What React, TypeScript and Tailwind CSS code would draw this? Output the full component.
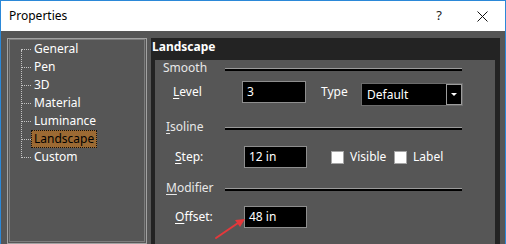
import React from 'react'

const font = { fontFamily: '"Noto Sans", "Open Sans", sans-serif' }

const treeItems = ['General', 'Pen', '3D', 'Material', 'Luminance', 'Landscape', 'Custom']

function Ul({ first, rest }: { first: string; rest: string }) {
  return (
    <span>
      <span className="underline underline-offset-2">{first}</span>
      {rest}
    </span>
  )
}

function GroupHeader({ label, pl, w }: { label: React.ReactNode; pl: string; w: string }) {
  return (
    <div className={`flex items-center h-[16px] ${pl}`}>
      <div className={`${w} leading-[16px] text-[#e8e8e8]`}>{label}</div>
      <div className="w-[237px] h-[3px] border-t border-[#9a9a9a] bg-black mt-[3px]" />
    </div>
  )
}

function TextBox({ value, w }: { value: string; w: string }) {
  return (
    <div className={`${w} h-[22px] bg-black border border-[#8e8e8e] pl-[4px] leading-[20px] text-white`}>
      {value}
    </div>
  )
}

function CheckBox({ label, w }: { label: string; w: string }) {
  return (
    <div className="flex items-center">
      <div className="w-[13px] h-[13px] bg-white border border-[#a5a5a5]" />
      <div className={`ml-[6px] ${w} text-white`}>{label}</div>
    </div>
  )
}

export default function App() {
  return (
    <div
      className="relative w-[506px] h-[244px] overflow-hidden border-t border-x border-[#2b88d8] flex flex-col text-[12px]"
      style={font}
    >
      {/* title bar */}
      <div className="h-[30px] bg-white flex items-center pl-[8px] text-black">
        <div className="flex-1 text-[12px]">Properties</div>
        <div className="w-[16px] text-center text-[13px] text-[#222]">?</div>
        <div className="w-[46px] ml-[12px] flex items-center justify-center">
          <svg width="11" height="11" viewBox="0 0 11 11">
            <path d="M0.5 0.5 L10.5 10.5 M10.5 0.5 L0.5 10.5" stroke="#111" strokeWidth="1" />
          </svg>
        </div>
      </div>

      {/* body */}
      <div className="flex-1 bg-[#565656] flex pt-[7px] pl-[6px]">
        {/* tree panel */}
        <div className="w-[140px] border border-[#a2a2a2] px-px pb-px">
          <div className="relative h-full border border-[#7c7c7c]">
            <div className="absolute left-[11px] top-[10px] h-[108px] border-l border-dotted border-[#c4c4c4]" />
            {treeItems.map((item) => (
              <div key={item} className="flex items-center h-[18px] pl-[11px]">
                <div className="w-[10px] border-t border-dotted border-[#c4c4c4]" />
                {item === 'Landscape' ? (
                  <div className="h-[18px] px-[2px] leading-[16px] bg-[#9c6a33] border border-dotted border-[#111] text-black">
                    {item}
                  </div>
                ) : (
                  <div className="px-[3px] leading-[18px] text-white">{item}</div>
                )}
              </div>
            ))}
          </div>
        </div>

        {/* right panel */}
        <div className="ml-[4px] w-[349px] bg-[#232323] flex flex-col">
          <div className="h-[22px] pl-[1px] pt-px leading-[16px] font-bold text-white">Landscape</div>
          <div className="flex-1 ml-[4px] w-[340px] bg-[#565656]">
            <GroupHeader label="Smooth" pl="pl-[8px]" w="w-[62px]" />

            <div className="flex items-start mt-[5px] h-[25px] pl-[18px]">
              <div className="w-[69px] leading-[21px] text-white">
                <Ul first="L" rest="evel" />
              </div>
              <TextBox value="3" w="w-[64px]" />
              <div className="ml-[15px] w-[40px] leading-[21px] text-white">Type</div>
              <div className="mt-[2px] flex h-[23px] w-[102px] bg-black border border-[#6c6c6c]">
                <div className="flex-1 pl-[5px] leading-[21px] text-white">Default</div>
                <div className="w-[16px] h-full border border-[#9c9c9c] flex items-center justify-center">
                  <svg width="6" height="4" viewBox="0 0 6 4">
                    <path d="M0 0 L6 0 L3 3 Z" fill="#fff" />
                  </svg>
                </div>
              </div>
            </div>

            <div className="mt-[13px]">
              <GroupHeader label={<Ul first="I" rest="soline" />} pl="pl-[11px]" w="w-[59px]" />
            </div>

            <div className="flex items-center mt-[11px] h-[22px] pl-[20px]">
              <div className="w-[69px] text-white">
                <Ul first="S" rest="tep:" />
              </div>
              <TextBox value="12 in" w="w-[63px]" />
              <div className="ml-[24px]">
                <CheckBox label="Visible" w="w-[44px]" />
              </div>
              <CheckBox label="Label" w="w-[40px]" />
            </div>

            <div className="mt-[12px]">
              <GroupHeader label={<Ul first="M" rest="odifier" />} pl="pl-[11px]" w="w-[59px]" />
            </div>

            <div className="flex items-center mt-[10px] h-[22px] pl-[20px]">
              <div className="w-[69px] text-white">
                <Ul first="O" rest="ffset:" />
              </div>
              <TextBox value="48 in" w="w-[63px]" />
            </div>
          </div>
        </div>
      </div>

      {/* annotation arrow */}
      <svg className="absolute left-[205px] top-[210px]" width="50" height="34" viewBox="0 0 50 34">
        <path d="M10 27 L32 12" stroke="#e5383b" strokeWidth="2" strokeLinecap="round" />
        <path d="M39 8 L29 9 L34 16 Z" fill="#e5383b" />
      </svg>
    </div>
  )
}
